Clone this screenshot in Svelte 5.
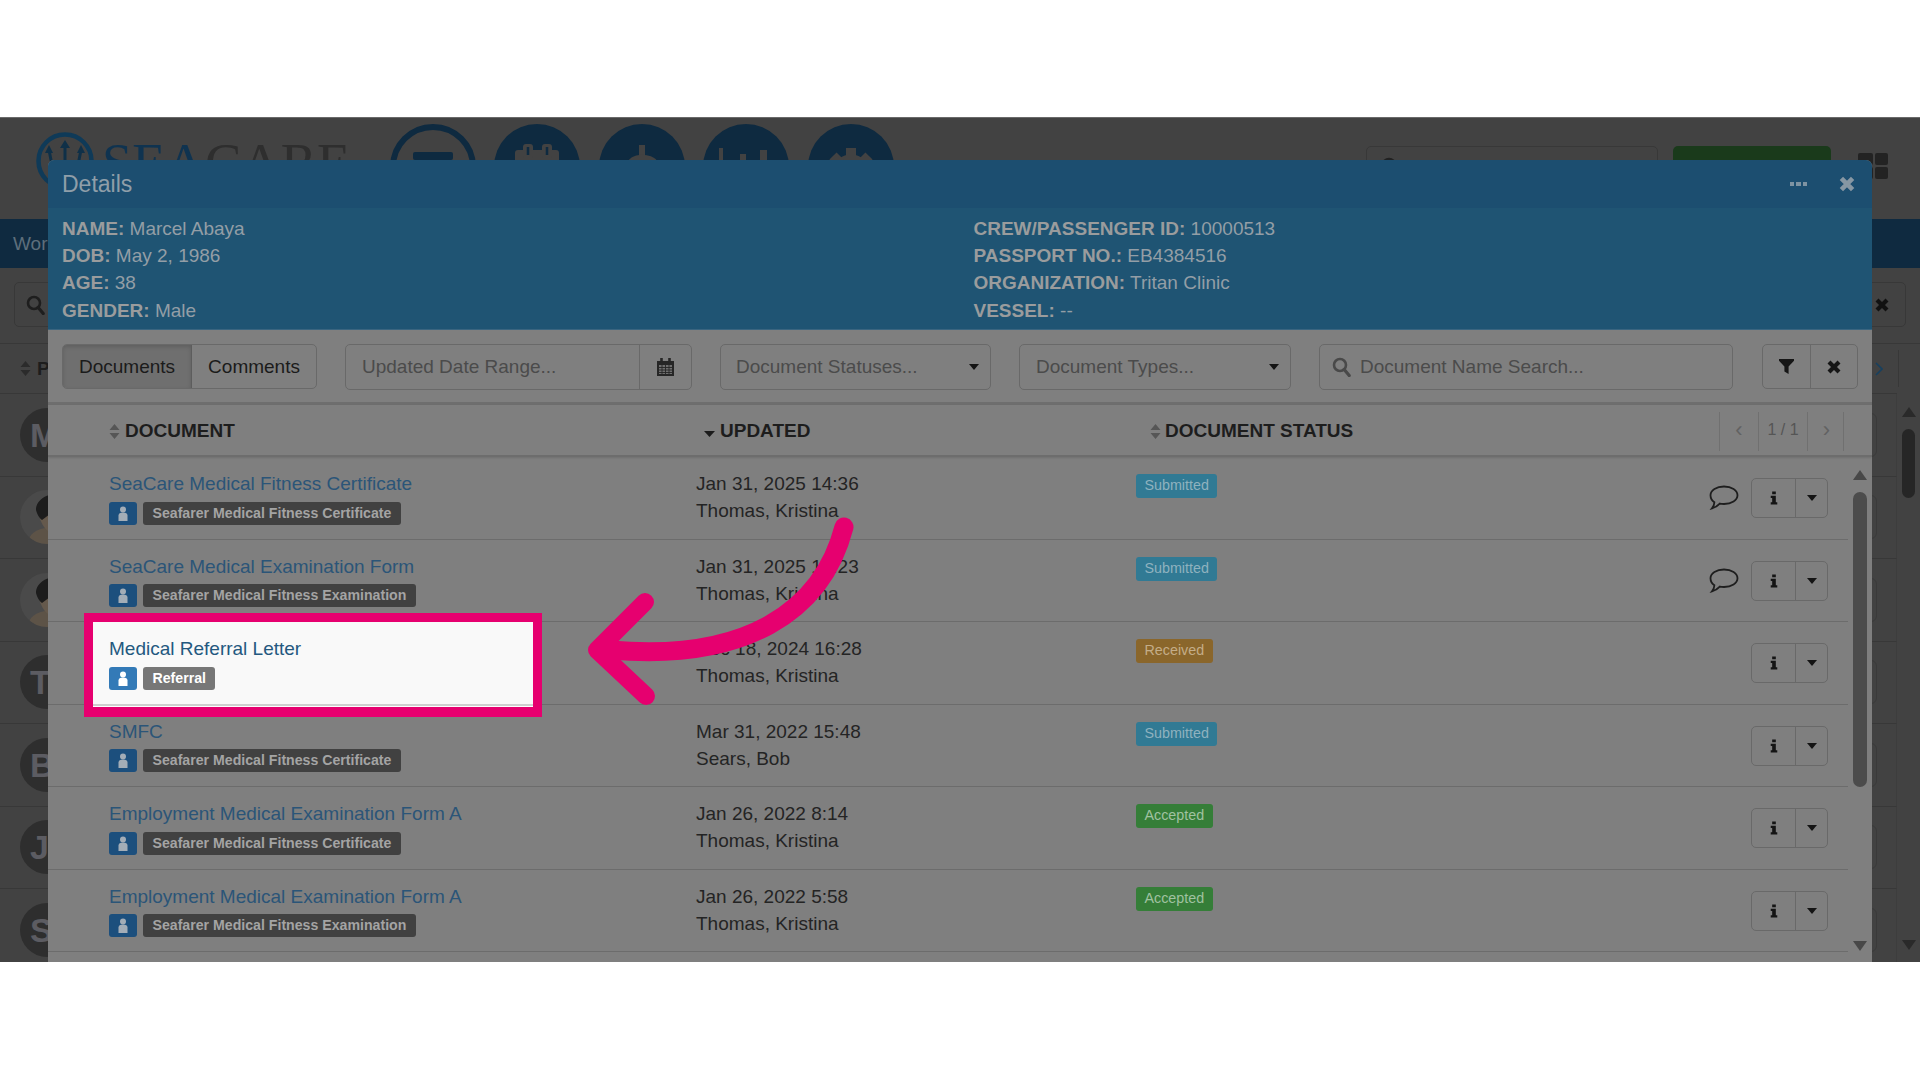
<script>
	const bgRows = [
		{ letter: 'M' },
		{ photo: true },
		{ photo: true },
		{ letter: 'T' },
		{ letter: 'B' },
		{ letter: 'J' },
		{ letter: 'S' }
	];

	const docs = [
		{ name: 'SeaCare Medical Fitness Certificate', tag: 'Seafarer Medical Fitness Certificate', date: 'Jan 31, 2025 14:36', by: 'Thomas, Kristina', status: 'Submitted', comment: true },
		{ name: 'SeaCare Medical Examination Form', tag: 'Seafarer Medical Fitness Examination', date: 'Jan 31, 2025 14:23', by: 'Thomas, Kristina', status: 'Submitted', comment: true },
		{ name: 'Medical Referral Letter', tag: 'Referral', date: 'Dec 18, 2024 16:28', by: 'Thomas, Kristina', status: 'Received', hi: true },
		{ name: 'SMFC', tag: 'Seafarer Medical Fitness Certificate', date: 'Mar 31, 2022 15:48', by: 'Sears, Bob', status: 'Submitted' },
		{ name: 'Employment Medical Examination Form A', tag: 'Seafarer Medical Fitness Certificate', date: 'Jan 26, 2022 8:14', by: 'Thomas, Kristina', status: 'Accepted' },
		{ name: 'Employment Medical Examination Form A', tag: 'Seafarer Medical Fitness Examination', date: 'Jan 26, 2022 5:58', by: 'Thomas, Kristina', status: 'Accepted' }
	];
</script>

{#snippet cross(size, color)}
	<svg width={size} height={size} viewBox="0 0 16 16"><path d="M3 3l10 10M13 3L3 13" stroke={color} stroke-width="4.2" fill="none" /></svg>
{/snippet}

{#snippet sorter(color = '#565656')}
	<svg class="sorter" width="11" height="15" viewBox="0 0 11 15"><path d="M5.500 0L10.500 6H.5zM5.500 15L.5 9h10z" fill={color} /></svg>
{/snippet}

{#snippet caret()}
	<svg width="10" height="6" viewBox="0 0 10 6"><path d="M0 0h10L5 6z" fill="#141414" /></svg>
{/snippet}

{#snippet loupe(color)}
	<svg width="19" height="20" viewBox="0 0 19 20"><circle cx="8" cy="8" r="6" stroke={color} stroke-width="2.6" fill="none" /><path d="M12.200 12.600l5 6" stroke={color} stroke-width="3.2" stroke-linecap="round" /></svg>
{/snippet}

<div class="page">
	<div class="stage">
		<div class="app">
			<div class="topbar">
				<div class="logo">
					<svg width="58" height="58" viewBox="0 0 58 58">
						<circle cx="29" cy="29" r="26.500" stroke="#0f3a58" stroke-width="4.500" fill="none" />
						<path d="M29 11v36M13 18l2 10c1 6 6 9 14 9s13-3 14-9l2-10" stroke="#0f3048" stroke-width="3" fill="none" />
						<path d="M29 8l5 8h-10zM13 13l4 8h-8zM45 13l4 8h-8z" fill="#0f3048" />
					</svg>
					<span class="wordmark"><span class="se">SEA</span>CARE</span>
				</div>
				<div class="circles">
					<div class="circle open"><i></i></div>
					<div class="circle">
						<svg width="86" height="86" viewBox="0 0 86 86">
							<rect x="21" y="26" width="44" height="34" rx="3" fill="#424242" />
							<rect x="29" y="20" width="10" height="14" rx="3" fill="#424242" />
							<rect x="48" y="20" width="10" height="14" rx="3" fill="#424242" />
							<path d="M34 23v8M53 23v8" stroke="#0e2a40" stroke-width="2.500" />
						</svg>
					</div>
					<div class="circle">
						<svg width="86" height="86" viewBox="0 0 86 86">
							<path d="M40 21h6v13h-6z" fill="#424242" />
							<path d="M56 40c-4-8-24-8-25 2-1 11 25 7 24 18-1 8-20 8-25 1" stroke="#424242" stroke-width="7" fill="none" />
						</svg>
					</div>
					<div class="circle">
						<svg width="86" height="86" viewBox="0 0 86 86">
							<path d="M16 24h4v46h-4zM37 30h6v40h-6zM57 26h7v44h-7z" fill="#424242" />
						</svg>
					</div>
					<div class="circle">
						<svg width="86" height="86" viewBox="0 0 86 86">
							<circle cx="43" cy="50" r="15" stroke="#424242" stroke-width="9" fill="none" />
							<path d="M43 24v52M17 50h52M25 32l36 36M61 32L25 68" stroke="#424242" stroke-width="10" />
						</svg>
					</div>
				</div>
				<div class="top-right">
					<div class="top-search">{@render loupe('#222')}</div>
					<div class="top-green"></div>
					<div class="grid-icon"><i></i><i></i><i></i><i></i></div>
				</div>
			</div>
			<div class="navbar">Wor</div>
			<div class="filter">
				<div class="filter-box">
					{@render loupe('#1e1e1e')}
					<span class="filter-x">{@render cross(16, '#111')}</span>
				</div>
			</div>
			<div class="lower">
				<div class="bg-table">
					<div class="bg-head">
						{@render sorter('#2b2b2b')}
						<b>P</b>
						<svg class="bg-chev" width="8" height="14" viewBox="0 0 8 14"><path d="M1 1l6 6-6 6" stroke="#17405f" stroke-width="1.600" fill="none" /></svg>
						<i class="bg-sep"></i>
					</div>
					{#each bgRows as r}
						<div class="bg-row">
							<div class="avatar" class:photo={r.photo}>
								{#if r.photo}
									<svg width="54" height="54" viewBox="0 0 54 54">
										<path d="M8 54c0-10 8-15 22-17v-7h24v24z" fill="#5d5347" />
										<path d="M18 18c2-3 6-6 10-6h26v30H30c-5-2-11-10-12-24z" fill="#65594c" />
										<path d="M16 20c0-12 14-19 38-18v10c-10 0-20 0-22 4l-2 8-8 6c-3-2-5-6-6-10z" fill="#1c1c1c" />
									</svg>
								{:else}
									{r.letter}
								{/if}
							</div>
							<div class="bg-box"></div>
						</div>
					{/each}
				</div>
				<div class="bg-scroll">
					<i class="up"></i>
					<div class="bg-thumb"></div>
					<i class="down"></i>
				</div>
			</div>
		</div>

		<div class="modal">
			<div class="modal-head">
				<span>Details</span>
				<div class="modal-tools">
					<span class="dots"><i></i><i></i><i></i></span>
					{@render cross(18, '#8797a3')}
				</div>
			</div>
			<div class="info">
				<div>
					<p><b>NAME:</b> Marcel Abaya</p>
					<p><b>DOB:</b> May 2, 1986</p>
					<p><b>AGE:</b> 38</p>
					<p><b>GENDER:</b> Male</p>
				</div>
				<div>
					<p><b>CREW/PASSENGER ID:</b> 10000513</p>
					<p><b>PASSPORT NO.:</b> EB4384516</p>
					<p><b>ORGANIZATION:</b> Tritan Clinic</p>
					<p><b>VESSEL:</b> --</p>
				</div>
			</div>
			<div class="toolbar">
				<div class="tabs">
					<div class="tab active">Documents</div>
					<div class="tab">Comments</div>
				</div>
				<div class="field date">
					<span class="input">Updated Date Range...</span>
					<span class="addon">
						<svg width="19" height="20" viewBox="0 0 19 20"><path d="M1 4h17v15H1z" fill="#262626" /><path d="M3 8h13v9H3z" fill="#6f6f6f" /><path d="M3 10.500h13M3 13h13M3 15.500h13M6 8v9M9.500 8v9M13 8v9" stroke="#262626" stroke-width=".9" /><path d="M5.500 1v5M13.500 1v5" stroke="#262626" stroke-width="2.600" /></svg>
					</span>
				</div>
				<div class="field select status-sel"><span>Document Statuses...</span>{@render caret()}</div>
				<div class="field select types-sel"><span>Document Types...</span>{@render caret()}</div>
				<div class="field search">
					{@render loupe('#494949')}
					<span>Document Name Search...</span>
				</div>
				<div class="tools">
					<div class="tool">
						<svg width="15" height="17" viewBox="0 0 18 20"><path d="M0 1h18v2l-6.500 7v9l-5-3v-6L0 3z" fill="#161616" /></svg>
					</div>
					<div class="tool">{@render cross(16, '#161616')}</div>
				</div>
			</div>
			<div class="table-head">
				<div class="th">{@render sorter()}DOCUMENT</div>
				<div class="th updated"><svg width="11" height="6" viewBox="0 0 11 6"><path d="M0 0h11L5.500 6z" fill="#1c1c1c" /></svg>UPDATED</div>
				<div class="th status-th">{@render sorter()}DOCUMENT STATUS</div>
				<div class="pager">
					<span>‹</span>
					<span class="count">1 / 1</span>
					<span>›</span>
				</div>
			</div>
			<div class="table-body">
				<div class="rows">
					{#each docs as d}
						<div class="row">
							<div class="doc" class:hi={d.hi}>
								<div class="doc-name">{d.name}</div>
								<div class="doc-tags">
									<span class="person">
										<svg width="10" height="15" viewBox="0 0 10 15"><circle cx="5" cy="3.600" r="3" fill="currentColor" /><path d="M.5 15V9.500C.5 7.500 2 6.500 5 6.500s4.500 1 4.500 3V15z" fill="currentColor" /></svg>
									</span>
									<span class="tag">{d.tag}</span>
								</div>
							</div>
							<div class="when">
								<div>{d.date}</div>
								<div>{d.by}</div>
							</div>
							<div class="state">
								<span class="pill {d.status.toLowerCase()}">{d.status}</span>
								<div class="actions">
									{#if d.comment}
										<svg class="comment" width="30" height="25" viewBox="0 0 30 25"><path d="M15 1.500c7.500 0 13.500 3.900 13.500 8.800S22.500 19 15 19c-1.500 0-2.900-.1-4.200-.4C8.600 21 6 22.500 3 23.300c1.400-1.700 2.300-3.500 2.400-6C3 15.700 1.500 13.200 1.500 10.300 1.500 5.400 7.500 1.500 15 1.500z" stroke="#1e1e1e" stroke-width="1.800" fill="none" /></svg>
									{/if}
									<div class="btns">
										<div class="btn-i">
											<svg width="8" height="14" viewBox="0 0 11 18"><path d="M3 0h5v4H3zM1 6h7v9h2v3H1v-3h2V9H1z" fill="#141414" /></svg>
										</div>
										<div class="btn-c">{@render caret()}</div>
									</div>
								</div>
							</div>
						</div>
					{/each}
				</div>
				<div class="scroll">
					<i class="up"></i>
					<div class="thumb"></div>
					<i class="down"></i>
				</div>
			</div>
		</div>
	</div>

	<svg class="arrow" width="1920" height="1080" viewBox="0 0 1920 1080">
		<path d="M844 527C822 612 745 662 610 650" stroke="#e6006f" stroke-width="19" fill="none" stroke-linecap="round" />
		<path d="M645 602L597 650 646 696" stroke="#e6006f" stroke-width="18" fill="none" stroke-linecap="round" stroke-linejoin="round" />
	</svg>
</div>

<style>
	:global(body) {
		margin: 0;
		background: #fff;
		font-family: 'Liberation Sans', Arial, sans-serif;
	}
	p {
		margin: 0;
	}
	.page {
		position: relative;
		width: 1920px;
		height: 1080px;
		overflow: hidden;
		background: #fff;
		padding-top: 117px;
		box-sizing: border-box;
	}
	.stage {
		position: relative;
		height: 845px;
		overflow: hidden;
		background: #424242;
		border-top: 1px solid #6a6a6a;
		box-sizing: border-box;
		font-size: 19px;
	}

	/* dimmed app behind the dialog */
	.topbar {
		height: 101px;
		display: flex;
		align-items: flex-start;
	}
	.logo {
		display: flex;
		align-items: flex-start;
		margin: 14px 0 0 36px;
		width: 353.500px;
	}
	.wordmark {
		font: 54.500px/54px 'Liberation Serif', serif;
		color: #2e2e2e;
		margin: 4px 0 0 8px;
	}
	.se {
		color: #0f3350;
	}
	.circles {
		display: flex;
		gap: 18.600px;
		margin-top: 6px;
	}
	.circle {
		width: 86px;
		height: 86px;
		border-radius: 50%;
		background: #0e2a40;
		display: flex;
		align-items: center;
		justify-content: center;
		box-sizing: border-box;
	}
	.circle.open {
		background: transparent;
		border: 6px solid #0e2a40;
	}
	.circle.open i {
		width: 40px;
		height: 8px;
		background: #0e2a40;
		border-radius: 2px;
		margin-top: -22px;
	}
	.top-right {
		display: flex;
		align-items: flex-start;
		margin-left: auto;
		margin-top: 28px;
	}
	.top-search {
		width: 292px;
		height: 44px;
		border: 1px solid #383838;
		border-radius: 5px;
		box-sizing: border-box;
		padding: 10px 14px;
		margin-right: 15px;
	}
	.top-green {
		width: 158px;
		height: 44px;
		background: #1a3a1b;
		border-radius: 5px;
		margin-right: 27px;
	}
	.grid-icon {
		display: grid;
		grid-template-columns: 15px 13px;
		grid-auto-rows: 12px;
		gap: 2px;
		margin-top: 7px;
		margin-right: 32px;
	}
	.grid-icon i {
		background: #232323;
		border-radius: 2px;
	}
	.navbar {
		height: 49px;
		background: #0f2a40;
		color: #5d6e7b;
		font-size: 19px;
		line-height: 49px;
		padding-left: 13px;
	}
	.filter {
		height: 76px;
		padding: 14px 14px 0;
		box-sizing: border-box;
		border-bottom: 1px solid #383838;
	}
	.filter-box {
		height: 45px;
		border: 1px solid #383838;
		border-radius: 5px;
		box-sizing: border-box;
		display: flex;
		align-items: center;
		justify-content: space-between;
		padding: 0 15px 0 11px;
	}
	.filter-x {
		display: flex;
	}
	.lower {
		display: flex;
	}
	.bg-table {
		width: 1897px;
	}
	.bg-head {
		height: 50px;
		display: flex;
		align-items: center;
		gap: 6px;
		padding-left: 20px;
		color: #1d1d1d;
		border-bottom: 1px solid #383838;
		box-sizing: border-box;
	}
	.bg-chev {
		margin-left: auto;
	}
	.bg-sep {
		width: 1px;
		height: 37px;
		background: #383838;
		margin: 0 -2px 0 9px;
		flex: none;
	}
	.bg-row {
		height: 82.500px;
		display: flex;
		align-items: center;
		justify-content: space-between;
		padding-left: 20px;
		box-sizing: border-box;
		border-bottom: 1px solid #383838;
		border-right: 1px solid #3d3d3d;
	}
	.avatar {
		width: 54px;
		height: 54px;
		border-radius: 50%;
		background: #2e2e2e;
		color: #5c5c62;
		font-size: 34px;
		font-weight: 700;
		line-height: 54px;
		padding-left: 10px;
		box-sizing: border-box;
		overflow: hidden;
	}
	.avatar.photo {
		background: #4a4a4a;
		padding-left: 0;
	}
	.avatar svg {
		display: block;
	}
	.bg-box {
		width: 100px;
		height: 44px;
		border: 1px solid #3a3a3a;
		border-radius: 6px;
		box-sizing: border-box;
		margin-right: 19px;
	}
	.bg-scroll {
		flex: 1;
		height: 617px;
		display: flex;
		flex-direction: column;
		align-items: center;
		padding-top: 63px;
		box-sizing: border-box;
	}
	.up {
		width: 0;
		height: 0;
		border-left: 7px solid transparent;
		border-right: 7px solid transparent;
		border-bottom: 10px solid #2a2a2a;
	}
	.down {
		width: 0;
		height: 0;
		border-left: 7px solid transparent;
		border-right: 7px solid transparent;
		border-top: 10px solid #2a2a2a;
		margin-top: auto;
		margin-bottom: 11px;
	}
	.bg-thumb {
		width: 13px;
		height: 69px;
		margin-top: 12px;
		background: #262626;
		border-radius: 7px;
	}

	/* dialog */
	.modal {
		position: absolute;
		left: 48px;
		right: 48px;
		top: 42px;
		bottom: 0;
		background: #7f7f7f;
		border-radius: 6px 6px 0 0;
		overflow: hidden;
		display: flex;
		flex-direction: column;
		color: #222;
	}
	.modal-head {
		height: 48px;
		flex: none;
		display: flex;
		align-items: center;
		justify-content: space-between;
		padding: 0 16px 0 14px;
		background: #1c4e70;
		color: #8f9ea9;
		font-size: 23px;
	}
	.modal-tools {
		display: flex;
		align-items: center;
		gap: 31px;
	}
	.dots {
		display: flex;
		gap: 2px;
	}
	.dots i {
		width: 4.500px;
		height: 4.500px;
		background: #7e93a2;
	}
	.info {
		height: 122px;
		flex: none;
		box-sizing: border-box;
		padding: 7px 14px 0;
		background: #1f5473;
		color: #939ea6;
		line-height: 27.200px;
		display: grid;
		grid-template-columns: 911.500px 1fr;
		border-bottom: 1px solid #3a6580;
	}
	.info b {
		color: #9a9c9d;
	}
	.toolbar {
		height: 75px;
		flex: none;
		box-sizing: border-box;
		padding: 14px 14px 0;
		display: flex;
		align-items: flex-start;
		gap: 28px;
		border-bottom: 3px solid #6e6e6e;
	}
	.tabs {
		display: flex;
		width: 255px;
		height: 45px;
		border: 1px solid #696969;
		border-radius: 5px;
		box-sizing: border-box;
		overflow: hidden;
	}
	.tab {
		display: flex;
		align-items: center;
		padding: 0 16px;
		color: #1b1b1b;
	}
	.tab.active {
		background: #6f6f6f;
		border-right: 1px solid #5d5d5d;
		box-shadow: inset 0 2px 4px rgba(0, 0, 0, 0.15);
	}
	.field {
		height: 46px;
		border: 1px solid #696969;
		border-radius: 5px;
		box-sizing: border-box;
		display: flex;
		align-items: center;
		color: #4b4b4b;
	}
	.date {
		width: 347px;
		overflow: hidden;
	}
	.input {
		flex: 1;
		padding-left: 16px;
	}
	.addon {
		width: 51px;
		height: 100%;
		border-left: 1px solid #696969;
		display: flex;
		align-items: center;
		justify-content: center;
	}
	.select {
		justify-content: space-between;
		padding: 0 11px 0 16px;
	}
	.status-sel {
		width: 271px;
		padding-left: 15px;
	}
	.types-sel {
		width: 272px;
	}
	.search {
		width: 414px;
		gap: 9px;
		padding-left: 12px;
	}
	.tools {
		display: flex;
		width: 96px;
		height: 45px;
		margin-left: 1px;
		border: 1px solid #696969;
		border-radius: 5px;
		box-sizing: border-box;
	}
	.tool {
		flex: 1;
		display: flex;
		align-items: center;
		justify-content: center;
	}
	.tool + .tool {
		border-left: 1px solid #696969;
	}
	.table-head {
		height: 52px;
		flex: none;
		box-sizing: border-box;
		padding: 2px 0 0 61px;
		display: grid;
		grid-template-columns: 595px 446px 569px 125px;
		align-items: center;
		font-weight: 700;
		color: #1d1d1d;
		border-bottom: 2px solid #6d6d6d;
		box-shadow: 0 1px 2px rgba(0, 0, 0, 0.12);
	}
	.th {
		display: flex;
		align-items: center;
		gap: 5px;
	}
	.th.updated svg {
		margin-top: 5px;
	}
	.th.status-th {
		gap: 4px;
	}
	.pager {
		height: 39px;
		align-self: end;
		margin-bottom: 4px;
		display: grid;
		grid-template-columns: 38px 50px 37px;
		color: #626262;
		font-weight: 400;
		font-size: 16px;
		border-left: 1px solid #707070;
		border-right: 1px solid #707070;
		box-sizing: border-box;
		text-align: center;
		line-height: 36px;
	}
	.pager span:first-child,
	.pager span:last-child {
		font-size: 22px;
	}
	.count {
		border-left: 1px solid #707070;
		border-right: 1px solid #707070;
		color: #555;
	}
	.table-body {
		flex: 1;
		display: flex;
		min-height: 0;
	}
	.rows {
		width: 1800px;
	}
	.row {
		height: 82.500px;
		box-sizing: border-box;
		padding-left: 61px;
		display: grid;
		grid-template-columns: 587px 440px 1fr;
		border-bottom: 1.500px solid #6c6c6c;
	}
	.doc-name {
		color: #2b5578;
		line-height: 27px;
		padding-top: 13px;
	}
	.doc-tags {
		display: flex;
		gap: 6px;
		margin-top: 4.500px;
	}
	.person {
		width: 28px;
		height: 23px;
		background: #1c4f7d;
		color: #a3adb7;
		border-radius: 3px;
		display: flex;
		align-items: center;
		justify-content: center;
	}
	.tag {
		height: 23px;
		line-height: 23px;
		padding: 0 9.500px;
		background: #414141;
		color: #a4a4a4;
		font-size: 14.150px;
		font-weight: 700;
		border-radius: 3px;
	}
	.doc.hi {
		position: relative;
		z-index: 1;
	}
	.doc.hi::before {
		content: '';
		position: absolute;
		z-index: -1;
		left: -25px;
		top: -9px;
		width: 458px;
		height: 104px;
		box-sizing: border-box;
		background: linear-gradient(#f9f9f9 0 82px, #cfcfcf 82px 84px, #fff 84px);
		border: solid #e6006f;
		border-width: 9px 9.500px 10px;
	}
	.hi .doc-name {
		color: #23587f;
	}
	.hi .person {
		background: #337ab7;
		color: #fff;
	}
	.hi .tag {
		background: #777;
		color: #fff;
	}
	.when {
		padding-top: 13px;
		line-height: 27.200px;
		color: #242424;
	}
	.state {
		display: flex;
		justify-content: space-between;
		padding-right: 20px;
	}
	.pill {
		height: 24px;
		line-height: 23px;
		margin-top: 17px;
		padding: 0 8.500px;
		font-size: 14.300px;
		border-radius: 3px;
	}
	.submitted {
		background: #317a94;
		color: #8fb2bf;
	}
	.received {
		background: #8a662b;
		color: #c4ad88;
	}
	.accepted {
		background: #357e38;
		color: #a0c2a1;
	}
	.actions {
		display: flex;
		align-items: flex-start;
		padding-top: 21px;
	}
	.comment {
		margin: 7px 12px 0 0;
	}
	.btns {
		display: flex;
		width: 77px;
		height: 40px;
		border: 1px solid #696969;
		border-radius: 5px;
		box-sizing: border-box;
	}
	.btn-i {
		width: 43px;
		display: flex;
		align-items: center;
		justify-content: center;
		border-right: 1px solid #696969;
	}
	.btn-c {
		flex: 1;
		display: flex;
		align-items: center;
		justify-content: center;
	}
	.scroll {
		flex: 1;
		display: flex;
		flex-direction: column;
		align-items: center;
		padding-top: 13px;
		box-sizing: border-box;
	}
	.scroll .up {
		border-bottom-color: #484848;
	}
	.scroll .down {
		border-top-color: #484848;
	}
	.thumb {
		width: 14px;
		height: 295px;
		margin-top: 12px;
		background: #4c4c4c;
		border-radius: 7px;
	}
	.arrow {
		position: absolute;
		left: 0;
		top: 0;
		pointer-events: none;
	}
</style>
